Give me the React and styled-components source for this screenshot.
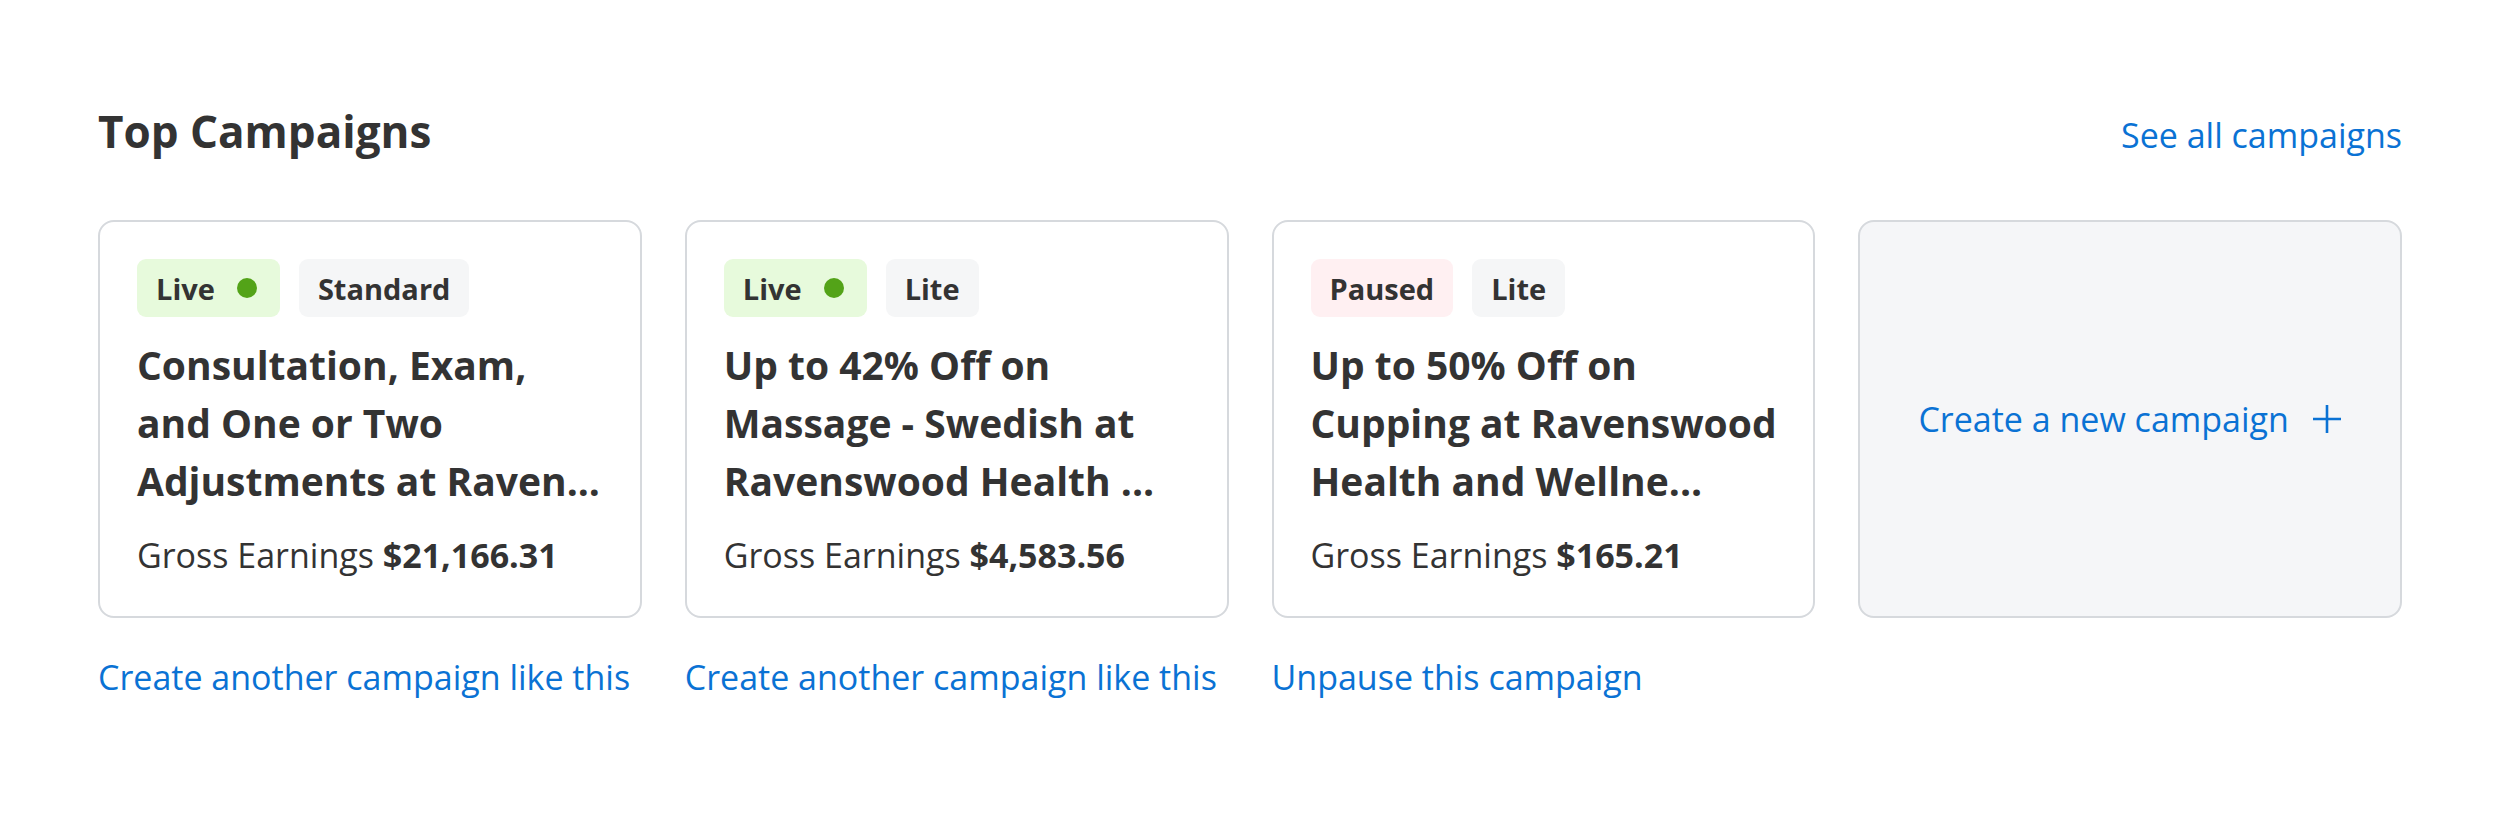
import React from "react";
import styled, { createGlobalStyle } from "styled-components";

const campaigns = [
  {
    status: "live",
    tier: "Standard",
    title: "Consultation, Exam, and One or Two Adjustments at Raven...",
    earnings: "$21,166.31",
    action: "Create another campaign like this",
  },
  {
    status: "live",
    tier: "Lite",
    title: "Up to 42% Off on Massage - Swedish at Ravenswood Health ...",
    earnings: "$4,583.56",
    action: "Create another campaign like this",
  },
  {
    status: "paused",
    tier: "Lite",
    title: "Up to 50% Off on Cupping at Ravenswood Health and Wellne...",
    earnings: "$165.21",
    action: "Unpause this campaign",
  },
];

const App = () => {
  return (
    <React.Fragment>
      <GlobalStyle />
      <Page>
        <Header>
          <Heading>Top Campaigns</Heading>
          <Link href="#">See all campaigns</Link>
        </Header>
        <Grid>
          {campaigns.map((c, i) => (
            <Column key={i}>
              <Card>
                <Badges>
                  <Badge $variant={c.status}>
                    {c.status === "live" ? "Live" : "Paused"}
                    {c.status === "live" && <Dot />}
                  </Badge>
                  <Badge $variant="tier">{c.tier}</Badge>
                </Badges>
                <Title>{c.title}</Title>
                <Earnings>
                  Gross Earnings <strong>{c.earnings}</strong>
                </Earnings>
              </Card>
              <Link href="#">{c.action}</Link>
            </Column>
          ))}
          <Column>
            <NewCard href="#">
              Create a new campaign
              <PlusIcon />
            </NewCard>
          </Column>
        </Grid>
      </Page>
    </React.Fragment>
  );
};

export default App;

const PlusIcon = () => (
  <svg width="30" height="30" viewBox="0 0 30 30" fill="none">
    <path d="M15 1v28M1 15h28" stroke="currentColor" strokeWidth="2.6" />
  </svg>
);

const GlobalStyle = createGlobalStyle`
  html, body {
    margin: 0;
    background: #ffffff;
  }
  body {
    font-family: "Open Sans", "Noto Sans", sans-serif;
    color: #333333;
  }
`;

const Page = styled.div`
  padding: 103px 98px 60px;
`;

const Header = styled.div`
  display: flex;
  justify-content: space-between;
  align-items: baseline;
`;

const Heading = styled.h2`
  margin: 0;
  font-size: 44px;
  line-height: 57px;
  font-weight: 700;
  color: #333333;
`;

const Link = styled.a`
  font-size: 34px;
  line-height: 44px;
  color: #0a72d4;
  text-decoration: none;
`;

const Grid = styled.div`
  display: grid;
  grid-template-columns: repeat(4, 1fr);
  gap: 43px;
  margin-top: 60px;
`;

const Column = styled.div`
  display: flex;
  flex-direction: column;
  gap: 37px;
`;

const Card = styled.div`
  box-sizing: border-box;
  height: 398px;
  border: 2px solid #d6d9dd;
  border-radius: 16px;
  padding: 37px 30px 37px 37px;
  background: #ffffff;
`;

const Badges = styled.div`
  display: flex;
  gap: 19px;
`;

const badgeBg = {
  live: "#e7fadc",
  paused: "#fff0f2",
  tier: "#f5f6f7",
};

const Badge = styled.span`
  display: inline-flex;
  align-items: center;
  gap: 22px;
  height: 58px;
  padding: 0 ${(p) => (p.$variant === "live" ? "23px" : "19px")} 0 19px;
  border-radius: 9px;
  background: ${(p) => badgeBg[p.$variant]};
  font-size: 29px;
  font-weight: 700;
  color: #333333;
`;

const Dot = styled.span`
  width: 20px;
  height: 20px;
  border-radius: 50%;
  background: #53a318;
`;

const Title = styled.h3`
  margin: 19px 0 0;
  font-size: 39px;
  line-height: 58px;
  font-weight: 700;
  color: #333333;
`;

const Earnings = styled.p`
  margin: 22px 0 0;
  font-size: 34px;
  line-height: 46px;
  color: #333333;

  strong {
    font-weight: 700;
  }
`;

const NewCard = styled.a`
  box-sizing: border-box;
  height: 398px;
  display: flex;
  align-items: center;
  justify-content: center;
  gap: 23px;
  border: 2px solid #d6d9dd;
  border-radius: 16px;
  background: #f5f6f8;
  font-size: 34px;
  color: #0a72d4;
  text-decoration: none;
`;
